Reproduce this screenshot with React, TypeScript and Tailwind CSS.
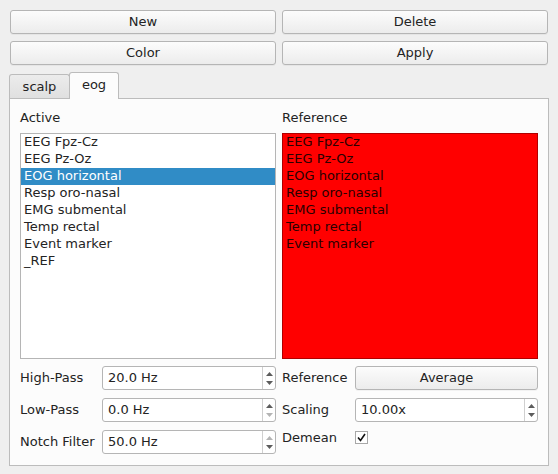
import React from 'react';

const channels = [
  'EEG Fpz-Cz',
  'EEG Pz-Oz',
  'EOG horizontal',
  'Resp oro-nasal',
  'EMG submental',
  'Temp rectal',
  'Event marker',
];

function PushButton({ label, className = '' }: { label: string; className?: string }) {
  return (
    <button
      className={`h-[24px] rounded-[3px] border border-[#b5b5b5] bg-gradient-to-b from-[#fcfcfc] to-[#ececec] text-[13px] text-[#232323] shadow-[0_1px_0_rgba(0,0,0,0.04)] ${className}`}
    >
      {label}
    </button>
  );
}

function Arrow({ dir, disabled }: { dir: 'up' | 'down'; disabled?: boolean }) {
  const fill = disabled ? '#b4b4b4' : '#5c5c5c';
  return (
    <svg width="7" height="4" viewBox="0 0 7 4">
      {dir === 'up' ? (
        <polygon points="3.5,0 7,4 0,4" fill={fill} />
      ) : (
        <polygon points="0,0 7,0 3.5,4" fill={fill} />
      )}
    </svg>
  );
}

function SpinBox({
  value,
  upDisabled,
  downDisabled,
}: {
  value: string;
  upDisabled?: boolean;
  downDisabled?: boolean;
}) {
  return (
    <div className="flex h-[24px] flex-1 rounded-[3px] border border-[#b5b5b5] bg-white">
      <div className="flex flex-1 items-center pl-[5px] text-[13px] text-[#232323]">{value}</div>
      <div className="flex w-[13px] flex-col items-center justify-center gap-[5px] border-l border-[#d0d0d0]">
        <Arrow dir="up" disabled={upDisabled} />
        <Arrow dir="down" disabled={downDisabled} />
      </div>
    </div>
  );
}

export default function App() {
  return (
    <div
      className="h-[474px] w-[558px] bg-[#efefef] px-[10px] pt-[10px] text-[13px] text-[#232323]"
      style={{ fontFamily: '"DejaVu Sans", "Liberation Sans", sans-serif' }}
    >
      {/* top buttons */}
      <div className="grid grid-cols-2 gap-x-[6px] gap-y-[7px]">
        <PushButton label="New" />
        <PushButton label="Delete" />
        <PushButton label="Color" />
        <PushButton label="Apply" />
      </div>

      {/* tab widget */}
      <div className="-mx-[1px] mt-[7px]">
        <div className="flex h-[26px] items-end">
          <div className="flex h-[24px] w-[61px] items-center justify-center rounded-t-[3px] border border-b-0 border-[#bcbcbc] bg-gradient-to-b from-[#ececec] to-[#e0e0e0]">
            scalp
          </div>
          <div className="relative z-10 -mb-[1px] -ml-[1px] flex h-[27px] w-[50px] items-center justify-center rounded-t-[3px] border border-b-0 border-[#bcbcbc] bg-[#fcfcfc] pb-[3px]">
            eog
          </div>
        </div>
        <div className="h-[368px] border border-[#bcbcbc] bg-[#fcfcfc] px-[10px] pt-[10px]">
          <div className="grid grid-cols-2 gap-x-[6px]">
            {/* left column */}
            <div className="flex flex-col">
              <div className="h-[17px] leading-[17px]">Active</div>
              <div className="mt-[7px] h-[226px] border border-[#b5b5b5] bg-white">
                {[...channels, '_REF'].map((c) => (
                  <div
                    key={c}
                    className={`h-[17px] pl-[3px] leading-[16px] ${
                      c === 'EOG horizontal' ? 'bg-[#308cc6] text-white' : ''
                    }`}
                  >
                    {c}
                  </div>
                ))}
              </div>
              <div className="mt-[7px] flex flex-col gap-[8px]">
                <div className="flex items-center">
                  <div className="w-[82px]">High-Pass</div>
                  <SpinBox value="20.0 Hz" />
                </div>
                <div className="flex items-center">
                  <div className="w-[82px]">Low-Pass</div>
                  <SpinBox value="0.0 Hz" downDisabled />
                </div>
                <div className="flex items-center">
                  <div className="w-[82px]">Notch Filter</div>
                  <SpinBox value="50.0 Hz" upDisabled />
                </div>
              </div>
            </div>

            {/* right column */}
            <div className="flex flex-col">
              <div className="h-[17px] leading-[17px]">Reference</div>
              <div className="mt-[7px] h-[226px] border border-[#b00000] bg-[#ff0000] text-[#2a0000]">
                {channels.map((c) => (
                  <div key={c} className="h-[17px] pl-[3px] leading-[16px]">
                    {c}
                  </div>
                ))}
              </div>
              <div className="mt-[7px] flex flex-col gap-[8px]">
                <div className="flex items-center">
                  <div className="w-[73px]">Reference</div>
                  <PushButton label="Average" className="flex-1" />
                </div>
                <div className="flex items-center">
                  <div className="w-[73px]">Scaling</div>
                  <SpinBox value="10.00x" />
                </div>
                <div className="flex h-[15px] items-center">
                  <div className="w-[73px]">Demean</div>
                  <div className="-mt-[1px] flex h-[13px] w-[13px] items-center justify-center border border-[#a8a8a8] bg-white">
                    <svg width="9" height="9" viewBox="0 0 9 9">
                      <path d="M1 4.5 L3.5 7.5 L8 1" stroke="#111" strokeWidth="1.6" fill="none" />
                    </svg>
                  </div>
                </div>
              </div>
            </div>
          </div>
        </div>
      </div>
    </div>
  );
}
